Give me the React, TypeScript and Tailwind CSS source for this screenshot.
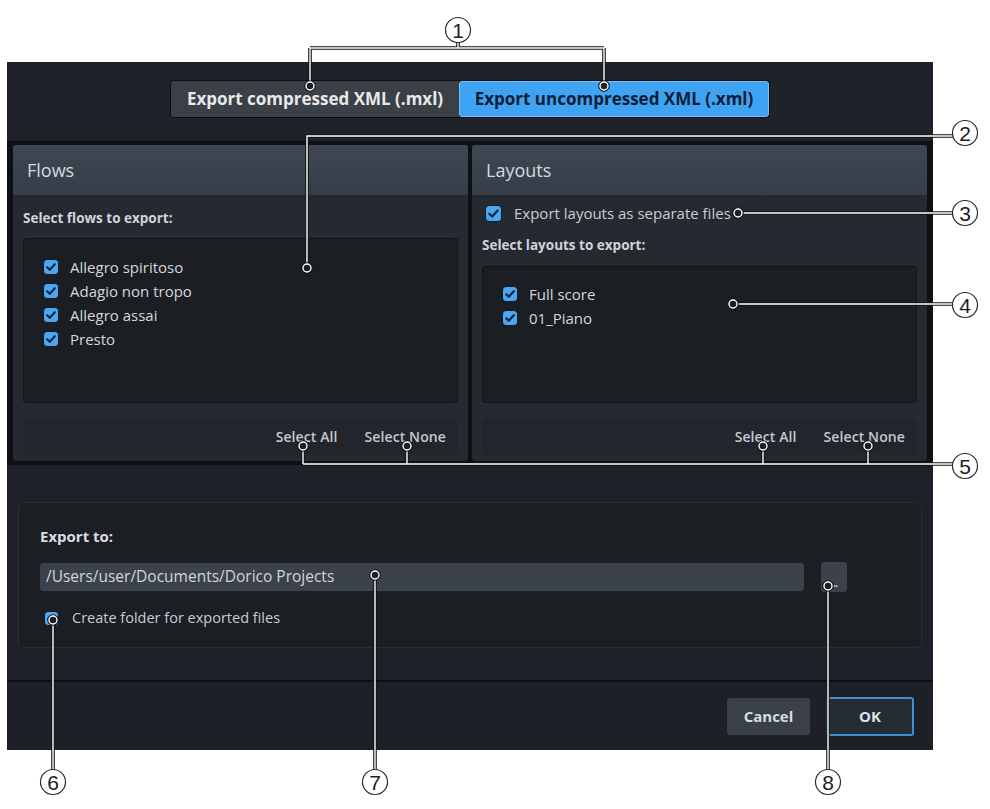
import type { ReactNode } from "react";

const flows = ["Allegro spiritoso", "Adagio non tropo", "Allegro assai", "Presto"];
const layouts = ["Full score", "01_Piano"];

function Check({ size = 16 }: { size?: number }) {
  return (
    <span
      className="flex shrink-0 items-center justify-center rounded-[4px] border border-[#0c1a2c] bg-[#4ea6f0]"
      style={{ width: size, height: size }}
    >
      <svg viewBox="0 0 16 16" className="h-full w-full">
        <polyline points="3.6,8.4 6.6,11.2 12.4,4.8" fill="none" stroke="#0b2242" strokeWidth="2.4" strokeLinecap="round" strokeLinejoin="round" />
      </svg>
    </span>
  );
}

function CheckRow({ label }: { label: string }) {
  return (
    <div className="flex h-[24px] items-center gap-[11px]">
      <Check />
      <span className="text-[15px] text-[#d4d8dc]">{label}</span>
    </div>
  );
}

function PanelFooter() {
  return (
    <div className="mt-[15px] flex h-[37px] items-center justify-end gap-[27px] rounded-sm bg-[#22262c] pr-[12px] text-[14px] font-semibold tracking-[0.1px] text-[#c3c8ce]">
      <span>Select All</span>
      <span>Select None</span>
    </div>
  );
}

function Panel({ title, children }: { title: string; children: ReactNode }) {
  return (
    <div className="flex flex-1 flex-col overflow-hidden rounded-[3px] bg-[#252a31]">
      <div className="flex h-[50px] shrink-0 items-center bg-gradient-to-b from-[#3e4753] to-[#353d48] pl-[14px] text-[18px] text-[#d6dade]">
        {title}
      </div>
      <div className="flex flex-1 flex-col px-[10px]">{children}</div>
    </div>
  );
}

type Pt = [number, number];

function Wire({ d }: { d: string }) {
  return (
    <>
      <path d={d} fill="none" stroke="#151515" strokeWidth="3.6" />
      <path d={d} fill="none" stroke="#ffffff" strokeWidth="1.4" />
    </>
  );
}

function Dot({ at }: { at: Pt }) {
  return (
    <>
      <circle cx={at[0]} cy={at[1]} r="4" fill="#1c1f24" stroke="#151515" strokeWidth="3.6" />
      <circle cx={at[0]} cy={at[1]} r="4" fill="#1c1f24" stroke="#ffffff" strokeWidth="1.4" />
    </>
  );
}

function Badge({ at, n }: { at: Pt; n: number }) {
  return (
    <>
      <circle cx={at[0]} cy={at[1]} r="12.5" fill="#ffffff" stroke="#2a2a2a" strokeWidth="1.2" />
      <text
        x={at[0]}
        y={at[1] + 7.5}
        textAnchor="middle"
        fontFamily="Liberation Sans, Arial, sans-serif"
        fontSize="21"
        fill="#1e1e1e"
      >
        {n}
      </text>
    </>
  );
}

// numbered callouts drawn over the dialog
function Callouts() {
  return (
    <svg className="pointer-events-none absolute inset-0" width="990" height="809" viewBox="0 0 990 809">
      <Wire d="M458 42 V48 M310 48 H604 M310 48 V86 M604 48 V86" />
      <Dot at={[310, 86]} />
      <Dot at={[604, 86]} />
      <Badge at={[458, 30]} n={1} />

      <Wire d="M953 136 H307 V268" />
      <Dot at={[307, 268]} />
      <Badge at={[965, 133]} n={2} />

      <Wire d="M738 213 H953" />
      <Dot at={[738, 213]} />
      <Badge at={[965, 213]} n={3} />

      <Wire d="M733 304 H953" />
      <Dot at={[733, 304]} />
      <Badge at={[965, 305]} n={4} />

      <Wire d="M303 464 H953 M303 446 V464 M407 446 V464 M763 446 V464 M868 446 V464" />
      <Dot at={[303, 446]} />
      <Dot at={[407, 446]} />
      <Dot at={[763, 446]} />
      <Dot at={[868, 446]} />
      <Badge at={[965, 466]} n={5} />

      <Wire d="M53 620 V770" />
      <Dot at={[53, 620]} />
      <Badge at={[53, 782]} n={6} />

      <Wire d="M375 575 V770" />
      <Dot at={[375, 575]} />
      <Badge at={[375, 782]} n={7} />

      <Wire d="M828 586 V770" />
      <Dot at={[828, 586]} />
      <Badge at={[828, 782]} n={8} />
    </svg>
  );
}

export default function App() {
  return (
    <div className="relative h-[809px] w-[990px] overflow-hidden bg-white font-['Open_Sans',sans-serif]">
      <div className="ml-[7px] mt-[62px] flex h-[688px] w-[926px] flex-col bg-[#1e2127]">
        {/* format toggle */}
        <div className="flex h-[79px] shrink-0 justify-center bg-[#1f2329] pt-[18px]">
          <div className="flex h-[38px] overflow-hidden rounded-[4px] border border-[#0b0d10] text-[17px] font-bold">
            <div className="flex w-[288px] items-center justify-center bg-[#3b3f46] text-[#e6e8ea]">
              Export compressed XML (.mxl)
            </div>
            <div className="flex w-[310px] items-center justify-center rounded-[3px] border border-[#79c0f7] bg-[#3fa3f3] text-[#0c1d35]">
              Export uncompressed XML (.xml)
            </div>
          </div>
        </div>

        {/* flows + layouts */}
        <div className="flex h-[324px] shrink-0 gap-[4px] bg-[#0e1013] px-[6px] py-[4px]">
          <Panel title="Flows">
            <div className="mt-[14px] h-[18px] text-[13.5px] font-bold leading-[18px] text-[#d0d4d8]">Select flows to export:</div>
            <div className="mt-[11px] h-[165px] rounded-[3px] border border-[#111316] bg-[#1b1e23] pl-[19px] pt-[16px]">
              {flows.map((f) => (
                <CheckRow key={f} label={f} />
              ))}
            </div>
            <PanelFooter />
          </Panel>
          <Panel title="Layouts">
            <div className="mt-[8px] flex h-[20px] items-center gap-[12px] pl-[3px]">
              <Check size={17} />
              <span className="text-[15px] text-[#c9cdd2]">Export layouts as separate files</span>
            </div>
            <div className="mt-[13px] h-[18px] text-[13.5px] font-bold leading-[18px] text-[#d0d4d8]">Select layouts to export:</div>
            <div className="mt-[12px] h-[137px] rounded-[3px] border border-[#111316] bg-[#1b1e23] pl-[19px] pt-[15px]">
              {layouts.map((l) => (
                <CheckRow key={l} label={l} />
              ))}
            </div>
            <PanelFooter />
          </Panel>
        </div>

        {/* destination */}
        <div className="shrink-0 px-[11px] pt-[37px]">
          <div className="h-[146px] rounded-[6px] border border-[#2a2f36] bg-[#1b1e23] px-[21px] pt-[23px]">
            <div className="h-[20px] text-[15px] font-bold leading-[20px] text-[#d8dce0]">Export to:</div>
            <div className="mt-[16px] flex items-center gap-[17px]">
              <div className="flex h-[28px] w-[764px] items-center rounded-[3px] bg-[#3b424b] pl-[6px] text-[15.5px] text-[#d0d5da]">
                /Users/user/Documents/Dorico Projects
              </div>
              <div className="flex h-[30px] w-[26px] items-end justify-center rounded-[3px] bg-[#3b424b] pb-[4px] text-[11px] font-bold leading-none tracking-[-1px] text-[#c8ccd0]">
                ...
              </div>
            </div>
            <div className="mt-[16px] flex h-[20px] items-center gap-[13px] pl-[4px]">
              <Check size={15} />
              <span className="text-[14.5px] text-[#c9cdd2]">Create folder for exported files</span>
            </div>
          </div>
        </div>

        <div className="flex-1" />

        {/* buttons */}
        <div className="flex h-[70px] shrink-0 items-center justify-end gap-[16px] border-t-2 border-[#0c0e11] bg-[#1d2026] pr-[19px]">
          <div className="flex h-[37px] w-[83px] items-center justify-center rounded-[3px] bg-[#3a4048] text-[15px] font-bold text-[#d8dde2]">
            Cancel
          </div>
          <div className="flex h-[39px] w-[88px] items-center justify-center rounded-[3px] border-2 border-[#3f8fd8] bg-[#262c34] text-[15px] font-bold text-[#dde2e6]">
            OK
          </div>
        </div>
      </div>
      <Callouts />
    </div>
  );
}
